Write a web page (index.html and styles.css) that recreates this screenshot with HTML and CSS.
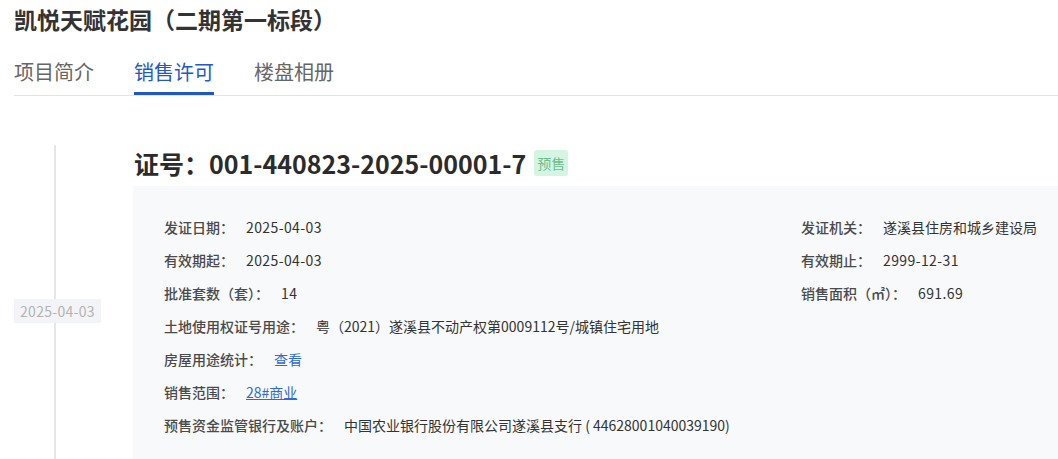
FILE: index.html
```html
<!DOCTYPE html>
<html lang="zh-CN">
<head>
  <meta charset="UTF-8">
  <title>凯悦天赋花园（二期第一标段） - 销售许可</title>
  <meta name="viewport" content="width=device-width, initial-scale=1.0">
  <link rel="stylesheet" href="styles.css">
</head>
<body>
  <h1 class="page-title">凯悦天赋花园（二期第一标段）</h1>

  <div class="tabs">
    <a class="tab" href="#">项目简介</a>
    <a class="tab active" href="#">销售许可</a>
    <a class="tab" href="#">楼盘相册</a>
  </div>

  <div class="timeline">
    <div class="timeline-side">
      <span class="timeline-date">2025-04-03</span>
    </div>

    <div class="permit">
      <div class="permit-head">
        <h2>证号：001-440823-2025-00001-7</h2>
        <span class="badge">预售</span>
      </div>

      <div class="permit-body">
        <div class="row"><span class="label">发证日期：</span><span class="value num">2025-04-03</span></div>
        <div class="row"><span class="label">发证机关：</span><span class="value">遂溪县住房和城乡建设局</span></div>

        <div class="row"><span class="label">有效期起：</span><span class="value num">2025-04-03</span></div>
        <div class="row"><span class="label">有效期止：</span><span class="value num">2999-12-31</span></div>

        <div class="row"><span class="label">批准套数（套）：</span><span class="value num">14</span></div>
        <div class="row"><span class="label">销售面积（㎡）：</span><span class="value num">691.69</span></div>

        <div class="row wide"><span class="label">土地使用权证号用途：</span><span class="value">粤（2021）遂溪县不动产权第0009112号/城镇住宅用地</span></div>
        <div class="row wide"><span class="label">房屋用途统计：</span><a class="value link" href="#">查看</a></div>
        <div class="row wide"><span class="label">销售范围：</span><a class="value link underline" href="#">28#商业</a></div>
        <div class="row wide"><span class="label">预售资金监管银行及账户：</span><span class="value">中国农业银行股份有限公司遂溪县支行 ( 44628001040039190)</span></div>
      </div>
    </div>
  </div>
</body>
</html>
```

FILE: styles.css
```css
* {
  box-sizing: border-box;
}

body {
  margin: 0;
  padding: 0 0 0 14px;
  font-family: "Noto Sans CJK SC", "Noto Sans", sans-serif;
  color: #333;
  background: #fff;
  overflow: hidden;
}

.page-title {
  margin: 0;
  font-size: 23px;
  line-height: 38px;
  font-weight: 700;
  color: #333;
}

.tabs {
  display: flex;
  gap: 40px;
  margin-top: 20px;
  border-bottom: 1px solid #e4e4e4;
}

.tab {
  font-size: 20px;
  line-height: 28px;
  padding-bottom: 6px;
  border-bottom: 3px solid transparent;
  color: #666;
  text-decoration: none;
}

.tab.active {
  color: #2259c4;
  border-bottom-color: #1f58c2;
}

.timeline {
  display: flex;
  margin-top: 49px;
}

.timeline-side {
  position: relative;
  width: 119px;
  flex-shrink: 0;
  display: flex;
  flex-direction: column;
  justify-content: center;
}

.timeline-side::before {
  content: "";
  position: absolute;
  left: 40px;
  top: 0;
  bottom: 0;
  width: 2px;
  background: #e6e6e6;
}

.timeline-date {
  position: relative;
  align-self: flex-start;
  width: 87px;
  height: 24px;
  line-height: 24px;
  text-align: center;
  font-size: 14px;
  letter-spacing: 0.3px;
  color: #b3b3b3;
  background: #f3f4f7;
  margin-top: 10px;
}

.permit {
  flex: 1;
}

.permit-head {
  display: flex;
  align-items: center;
  gap: 8px;
  height: 36px;
  padding-left: 1px;
  margin-bottom: 5px;
}

.permit-head h2 {
  margin: 0;
  font-size: 25px;
  font-weight: 700;
  color: #2b2b2b;
}

.badge {
  font-size: 14px;
  line-height: 26px;
  padding: 0 3px;
  border-radius: 3px;
  background: #d5f5e3;
  color: #6abf8c;
}

.permit-body {
  background: #f8f9fb;
  padding: 31px 21px 31px 31px;
  display: grid;
  grid-template-columns: 1fr 236px;
  row-gap: 13px;
  font-size: 14px;
  line-height: 20px;
}

.row {
  display: flex;
  gap: 12px;
  white-space: nowrap;
}

.row.wide {
  grid-column: 1 / -1;
}

.label {
  font-weight: 500;
  color: #4a4a4a;
}

.value {
  color: #333;
}

.value.num {
  letter-spacing: 0.4px;
}

.link {
  color: #2f6bd4;
  text-decoration: none;
}

.link.underline {
  text-decoration: underline;
}
```
